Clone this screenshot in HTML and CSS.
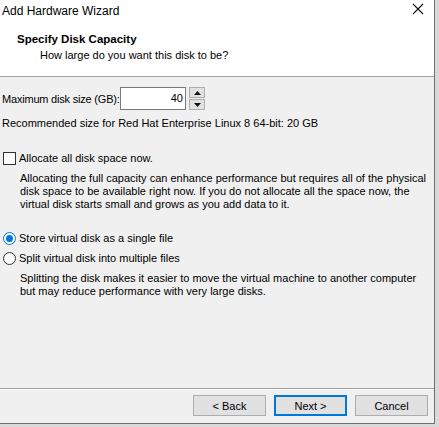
FILE: index.html
```html
<!DOCTYPE html>
<html>
<head>
<meta charset="utf-8">
<link rel="stylesheet" href="styles.css">
</head>
<body>
<div class="window">
  <div class="titlebar">
    <span class="title">Add Hardware Wizard</span>
    <svg class="close" width="12" height="12" viewBox="0 0 12 12"><path d="M1 1L11 11M11 1L1 11" stroke="#111" stroke-width="1.1" fill="none"/></svg>
  </div>
  <div class="header">
    <div class="h-title">Specify Disk Capacity</div>
    <div class="h-sub">How large do you want this disk to be?</div>
  </div>
  <div class="content">
    <div class="size-row">
      <span class="label">Maximum disk size (GB):</span>
      <div class="input">40</div>
      <div class="spin">
        <div class="spin-btn"><svg width="7" height="4" viewBox="0 0 7 4"><path d="M0 4L3.5 0L7 4Z" fill="#111"/></svg></div>
        <div class="spin-btn"><svg width="7" height="4" viewBox="0 0 7 4"><path d="M0 0L3.5 4L7 0Z" fill="#111"/></svg></div>
      </div>
    </div>
    <div class="recommend">Recommended size for Red Hat Enterprise Linux 8 64-bit: 20 GB</div>
    <div class="option check-opt">
      <span class="checkbox"></span>
      <span>Allocate all disk space now.</span>
    </div>
    <p class="desc">Allocating the full capacity can enhance performance but requires all of the physical disk space to be available right now. If you do not allocate all the space now, the virtual disk starts small and grows as you add data to it.</p>
    <div class="option radio-opt first">
      <span class="radio checked"></span>
      <span>Store virtual disk as a single file</span>
    </div>
    <div class="option radio-opt">
      <span class="radio"></span>
      <span>Split virtual disk into multiple files</span>
    </div>
    <p class="desc">Splitting the disk makes it easier to move the virtual machine to another computer but may reduce performance with very large disks.</p>
  </div>
  <div class="footer">
    <button class="btn">&lt; Back</button>
    <button class="btn default">Next &gt;</button>
    <button class="btn">Cancel</button>
  </div>
</div>
</body>
</html>
```
FILE: styles.css
```css
html, body {
  margin: 0;
  padding: 0;
}
body {
  width: 439px;
  height: 427px;
  background: #d9d9d9;
  font-family: "Liberation Sans", Arial, sans-serif;
  font-size: 11px;
  color: #000;
  overflow: hidden;
}
.window {
  width: 434px;
  height: 423px;
  background: #f0f0f0;
  border-right: 1px solid #6f6f6f;
  border-bottom: 1px solid #6f6f6f;
  display: flex;
  flex-direction: column;
}
.titlebar {
  height: 22px;
  background: #fff;
  display: flex;
  align-items: center;
  justify-content: space-between;
  padding: 0 10px 0 2px;
}
.title {
  font-size: 12px;
}
.close {
  margin-top: -4px;
}
.header {
  background: #fff;
  height: 55px;
  border-bottom: 1px solid #a0a0a0;
  padding: 10px 0 0 17px;
  box-sizing: border-box;
}
.h-title {
  font-weight: bold;
  font-size: 11.5px;
  line-height: 15px;
}
.h-sub {
  padding-left: 23px;
  line-height: 15px;
  margin-top: 1px;
}
.content {
  flex: 1;
  padding: 10px 0 0 2px;
}
.size-row {
  display: flex;
  align-items: center;
}
.label {
  width: 118px;
  white-space: nowrap;
  letter-spacing: -0.2px;
}
.input {
  width: 62px;
  height: 21px;
  border: 1px solid #7a7a7a;
  background: #fff;
  text-align: right;
  line-height: 21px;
  padding-right: 2px;
  box-sizing: content-box;
}
.spin {
  margin-left: 3px;
  display: flex;
  flex-direction: column;
  gap: 1px;
}
.spin-btn {
  width: 14px;
  height: 9px;
  border: 1px solid #adadad;
  background: #e1e1e1;
  display: flex;
  align-items: center;
  justify-content: center;
}
.recommend {
  margin-top: 6px;
  line-height: 15px;
}
.option {
  display: flex;
  align-items: center;
  gap: 3px;
  line-height: 15px;
}
.check-opt {
  margin-top: 20px;
  margin-left: 1px;
}
.checkbox {
  width: 11px;
  height: 11px;
  border: 1px solid #333;
  background: #fff;
}
.desc {
  margin: 6px 0 0 18px;
  line-height: 13px;
  width: 412px;
}
.radio-opt.first {
  margin-top: 20px;
}
.radio-opt {
  margin-top: 5px;
  margin-left: 1px;
}
.radio {
  width: 11px;
  height: 11px;
  border: 1px solid #333;
  border-radius: 50%;
  background: #fff;
  position: relative;
}
.radio.checked {
  border-color: #0078d7;
}
.radio.checked::after {
  content: "";
  position: absolute;
  left: 2px;
  top: 2px;
  width: 7px;
  height: 7px;
  border-radius: 50%;
  background: #0078d7;
}
.footer {
  height: 35px;
  border-top: 1px solid #a0a0a0;
  box-shadow: inset 0 1px 0 #fff;
  display: flex;
  justify-content: flex-end;
  align-items: center;
  gap: 8px;
  padding: 0 6px 1px 0;
  box-sizing: border-box;
}
.btn {
  width: 73px;
  height: 21px;
  background: #e1e1e1;
  border: 1px solid #adadad;
  font-family: inherit;
  font-size: 11px;
  color: #000;
  padding: 0;
  margin: 0;
}
.btn.default {
  border: 2px solid #0078d7;
}
```
